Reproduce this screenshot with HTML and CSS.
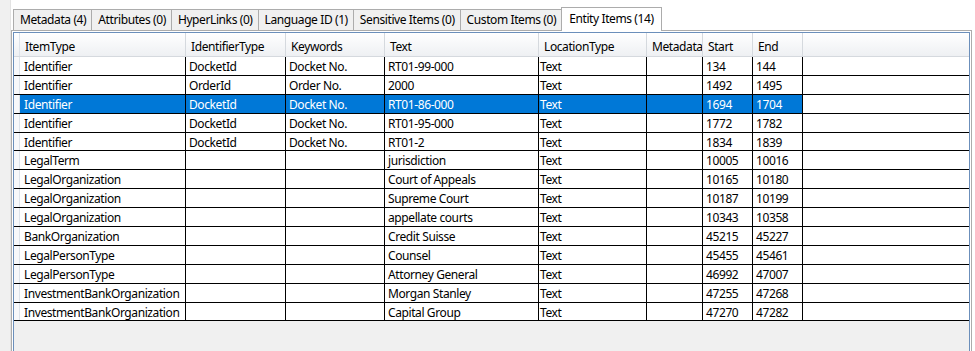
FILE: index.html
```html
<!DOCTYPE html>
<html lang="en">

<head>
    <meta charset="UTF-8">
    <title>Entity Items</title>
    <link rel="stylesheet" href="styles.css">
</head>

<body>
    <div class="window">
        <div class="side"></div>
        <div class="main">
            <div class="tabs">
                <div class="tab">Metadata (4)</div>
                <div class="tab">Attributes (0)</div>
                <div class="tab">HyperLinks (0)</div>
                <div class="tab">Language ID (1)</div>
                <div class="tab">Sensitive Items (0)</div>
                <div class="tab">Custom Items (0)</div>
                <div class="tab active">Entity Items (14)</div>
            </div>

            <div class="panel">
                <div class="grid">
                    <div class="head">
                        <div class="rowhead"></div>
                        <div class="hcell c1">ItemType</div>
                        <div class="hcell c2">IdentifierType</div>
                        <div class="hcell c3">Keywords</div>
                        <div class="hcell c4">Text</div>
                        <div class="hcell c5">LocationType</div>
                        <div class="hcell c6">Metadata</div>
                        <div class="hcell c7">Start</div>
                        <div class="hcell c8">End</div>
                        <div class="hcell fill"></div>
                    </div>
                    <div id="rows"></div>
                </div>
            </div>
        </div>
    </div>

    <script>
        let items = [
            ["Identifier", "DocketId", "Docket No.", "RT01-99-000", "Text", "", "134", "144"],
            ["Identifier", "OrderId", "Order No.", "2000", "Text", "", "1492", "1495"],
            ["Identifier", "DocketId", "Docket No.", "RT01-86-000", "Text", "", "1694", "1704"],
            ["Identifier", "DocketId", "Docket No.", "RT01-95-000", "Text", "", "1772", "1782"],
            ["Identifier", "DocketId", "Docket No.", "RT01-2", "Text", "", "1834", "1839"],
            ["LegalTerm", "", "", "jurisdiction", "Text", "", "10005", "10016"],
            ["LegalOrganization", "", "", "Court of Appeals", "Text", "", "10165", "10180"],
            ["LegalOrganization", "", "", "Supreme Court", "Text", "", "10187", "10199"],
            ["LegalOrganization", "", "", "appellate courts", "Text", "", "10343", "10358"],
            ["BankOrganization", "", "", "Credit Suisse", "Text", "", "45215", "45227"],
            ["LegalPersonType", "", "", "Counsel", "Text", "", "45455", "45461"],
            ["LegalPersonType", "", "", "Attorney General", "Text", "", "46992", "47007"],
            ["InvestmentBankOrganization", "", "", "Morgan Stanley", "Text", "", "47255", "47268"],
            ["InvestmentBankOrganization", "", "", "Capital Group", "Text", "", "47270", "47282"]
        ];

        let rows = document.getElementById("rows");

        for (let i = 0; i < items.length; i++) {
            let row = document.createElement("div");
            row.className = i == 2 ? "row selected" : "row";

            let head = document.createElement("div");
            head.className = "rowhead";
            row.appendChild(head);

            for (let j = 0; j < items[i].length; j++) {
                let cell = document.createElement("div");
                cell.className = "cell c" + (j + 1);
                cell.textContent = items[i][j];
                row.appendChild(cell);
            }

            let fill = document.createElement("div");
            fill.className = "cell fill";
            row.appendChild(fill);

            rows.appendChild(row);
        }
    </script>
</body>

</html>
```

FILE: styles.css
```css
*{
    padding: 0px;
    margin: 0px;
    box-sizing: border-box;
}

body{
    background-color: white;
    font-family: "Noto Sans", "Open Sans", sans-serif;
    font-size: 12px;
    letter-spacing: -0.4px;
    color: black;
    overflow: hidden;
}

.window{
    display: flex;
    height: 351px;
}

.side{
    width: 11px;
    background-color: #f0f0f0;
    border-right: 1px solid #e3e3e3;
}

.main{
    width: 961px;
    padding-top: 7px;
}

/* tab strip */
.tabs{
    display: flex;
    align-items: flex-end;
    height: 23px;
    padding-left: 2px;
    position: relative;
    z-index: 1;
}

.tab{
    height: 21px;
    line-height: 20px;
    padding: 0px 5px 0px 6px;
    background-color: #f0f0f0;
    border: 1px solid #acacac;
    border-bottom: none;
    margin-right: -1px;
    white-space: nowrap;
}

.tab.active{
    height: 24px;
    line-height: 22px;
    background-color: white;
    margin-bottom: -1px;
    padding: 0px 7px;
}

/* tab content */
.panel{
    height: 321px;
    border: 1px solid #acacac;
    border-bottom: none;
    padding: 1px 1px 0px 1px;
    background-color: white;
}

.grid{
    height: 100%;
    border: 1px solid #6b8fbb;
    border-bottom: none;
    background-color: #f0f0f0;
}

.head{
    display: flex;
    height: 24px;
    background: linear-gradient(to bottom, #ffffff, #eef0f3);
    border-bottom: 1px solid #d5d9de;
}

.row{
    display: flex;
    height: 18.9px;
    background-color: white;
    border-bottom: 1px solid black;
}

.rowhead{
    width: 6px;
    flex-shrink: 0;
    background-color: #f7f8fa;
    border-right: 1px solid #dde3ea;
}

.head .rowhead{
    background: transparent;
}

.hcell, .cell{
    flex-shrink: 0;
    white-space: nowrap;
    overflow: hidden;
}

.hcell{
    line-height: 23px;
    padding: 2px 0px 0px 5px;
    border-right: 1px solid #d5d9de;
}

.cell{
    line-height: 19px;
    padding-left: 3px;
    border-right: 1px solid black;
}

.row .c1{
    padding-left: 4px;
}

.row .c5{
    padding-left: 1px;
}

.c1{ width: 166px; }
.c2{ width: 100px; }
.c3{ width: 99px; }
.c4{ width: 154px; }
.c5{ width: 108px; }
.c6{ width: 56px; }
.c7{ width: 50px; }
.c8{ width: 50px; }

.fill{
    flex-grow: 1;
    border-right: none;
}

.head .fill{
    border-right: none;
}

.row.selected .cell{
    background-color: #0078d7;
    color: white;
}

.row.selected .fill{
    background-color: white;
}
```
